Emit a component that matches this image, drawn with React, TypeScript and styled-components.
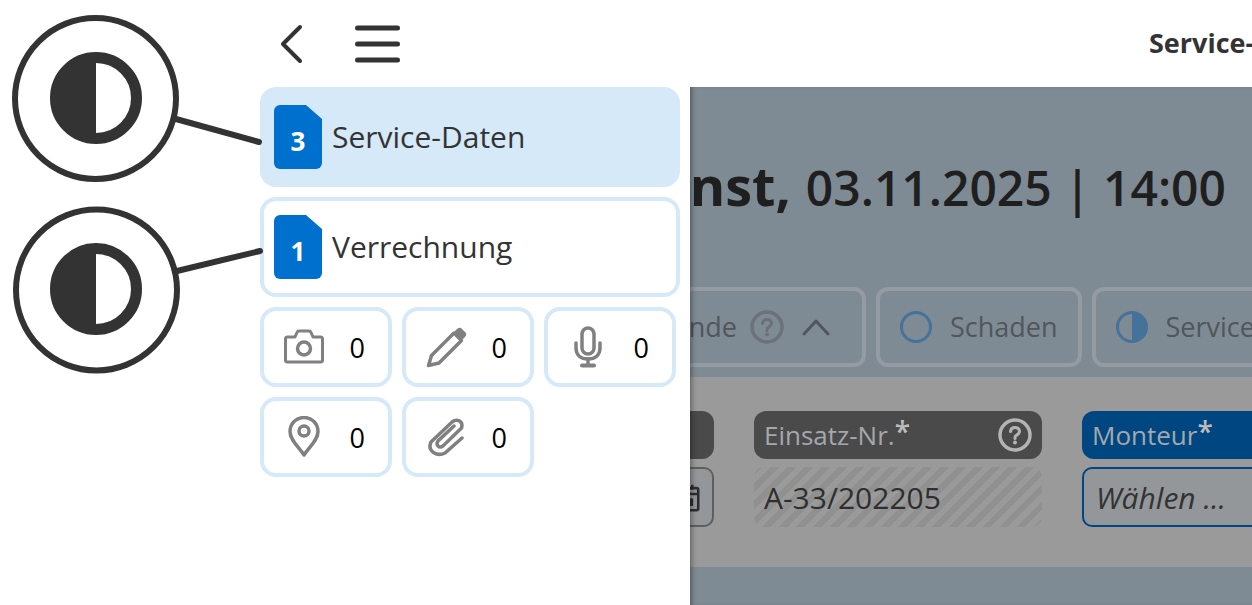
import styled, { createGlobalStyle } from "styled-components";

const GlobalStyle = createGlobalStyle`
  html, body {
    margin: 0;
    padding: 0;
    background: #fff;
  }
  * {
    box-sizing: border-box;
  }
`;

const Page = styled.div`
  display: flex;
  width: 1252px;
  height: 605px;
  overflow: hidden;
  font-family: "Open Sans", "Liberation Sans", sans-serif;
  color: #333;
`;

const Gutter = styled.div`
  position: relative;
  flex: 0 0 260px;
`;

const Callouts = styled.svg`
  position: absolute;
  top: 0;
  left: 0;
  overflow: visible;
`;

const Sidebar = styled.aside`
  flex: 0 0 420px;
  display: flex;
  flex-direction: column;
  gap: 10px;
`;

const Toolbar = styled.div`
  display: flex;
  align-items: center;
  gap: 49px;
  height: 77px;
  padding: 10px 0 0 20px;
`;

const NavItem = styled.div<{ $active?: boolean }>`
  display: flex;
  align-items: center;
  gap: 10px;
  height: 100px;
  padding: 0 10px 2px;
  border-radius: 16px;
  border: 4px solid #d5e9f9;
  background: ${(props) => (props.$active ? "#d5e9f9" : "#fff")};
  font-size: 30px;
`;

const DocBadge = styled.div`
  flex: 0 0 48px;
  height: 64px;
  margin-top: 2px;
  display: flex;
  align-items: flex-end;
  justify-content: center;
  padding-bottom: 11px;
  background: #0070cf;
  border-radius: 6px;
  clip-path: polygon(0 0, 32px 0, 48px 14px, 48px 64px, 0 64px);
  color: #fff;
  font-size: 26px;
  font-weight: 700;
  line-height: 34px;
`;

const Tiles = styled.div`
  display: grid;
  grid-template-columns: repeat(3, 132px);
  grid-auto-rows: 80px;
  gap: 10px;
`;

const Tile = styled.div`
  display: flex;
  align-items: center;
  justify-content: space-between;
  padding: 0 23px 0 20px;
  border: 4px solid #d5e9f9;
  border-radius: 16px;
  font-size: 27px;
  color: #000;
`;

const IconSlot = styled.span`
  flex: 0 0 40px;
  display: flex;
  justify-content: center;
`;

const Main = styled.main`
  flex: 0 0 562px;
  margin-left: 10px;
  display: flex;
  flex-direction: column;
  overflow: hidden;
`;

const TopBar = styled.header`
  flex: 0 0 87px;
  display: flex;
  align-items: center;
  padding: 0 0 2px 459px;
  font-size: 27px;
  font-weight: 700;
  white-space: nowrap;
`;

const Stage = styled.section`
  position: relative;
  flex: 1;
  background: #7f8b94;
  overflow: hidden;
  &::after {
    content: "";
    position: absolute;
    inset: 0;
    box-shadow: inset 5px 0 5px -3px rgba(0, 0, 0, 0.35);
    pointer-events: none;
  }
`;

const Heading = styled.h1`
  display: flex;
  align-items: baseline;
  justify-content: flex-end;
  height: 200px;
  margin: 0;
  padding: 61px 26px 0 0;
  font-size: 48px;
  font-weight: 600;
  color: #1f1f1f;
  white-space: nowrap;
  b {
    font-size: 54px;
    font-weight: 700;
    margin-right: 15px;
  }
`;

const Tabs = styled.div`
  display: flex;
  gap: 10px;
  height: 80px;
  margin-left: -200px;
`;

const Tab = styled.div<{ $width: number }>`
  flex: 0 0 ${(props) => props.$width}px;
  display: flex;
  align-items: center;
  gap: 18px;
  padding: 0 20px;
  border: 4px solid #959ca1;
  border-radius: 12px;
  font-size: 27px;
  color: #50565b;
  white-space: nowrap;
`;

const OpenTab = styled(Tab)`
  justify-content: flex-end;
  gap: 13px;
  padding-right: 32px;
`;

const TabLabel = styled.span`
  margin-bottom: 2px;
`;

const Chevron = styled.svg`
  margin-left: 5px;
`;

const Band = styled.div`
  display: grid;
  grid-template-columns: repeat(3, 288px);
  column-gap: 40px;
  height: 190px;
  margin: 10px 0 0 -264px;
  padding-top: 34px;
  background: #9a9a9a;
`;

const Field = styled.div`
  display: flex;
  flex-direction: column;
  gap: 8px;
`;

const FieldLabel = styled.div<{ $blue?: boolean }>`
  display: flex;
  align-items: center;
  justify-content: space-between;
  height: 48px;
  padding: 0 10px;
  border-radius: 12px;
  background: ${(props) => (props.$blue ? "#004680" : "#4a4a4a")};
  color: #a4a8ac;
  font-size: 26px;
  sup {
    font-size: 28px;
    font-weight: 600;
    line-height: 0;
    vertical-align: 3px;
    color: #bdbdbd;
  }
`;

const Input = styled.div`
  display: flex;
  align-items: center;
  justify-content: flex-end;
  height: 60px;
  padding: 0 12px;
  border: 2px solid #5f5f5f;
  border-radius: 10px;
  background: #94979a;
`;

const ReadOnly = styled.div`
  display: flex;
  align-items: center;
  height: 60px;
  padding: 0 10px;
  border-radius: 10px;
  font-size: 30px;
  color: #2e2e2e;
  background: repeating-linear-gradient(
    135deg,
    #909090 0 6px,
    #9a9a9a 6px 12px
  );
`;

const Select = styled.div`
  display: flex;
  align-items: center;
  height: 60px;
  padding: 0 12px;
  border: 2px solid #004680;
  border-radius: 10px;
  background: #94979a;
  font-size: 30px;
  font-style: italic;
  color: #333;
`;

function HalfDisc({ cx, cy }: { cx: number; cy: number }) {
  return (
    <>
      <circle cx={cx} cy={cy} r={40.5} fill="#fff" stroke="#333" strokeWidth={11} />
      <path d={`M${cx} ${cy - 40}a40 40 0 0 0 0 80z`} fill="#333" />
    </>
  );
}

function CameraIcon() {
  return (
    <svg width="40" height="36" viewBox="0 0 40 36" fill="none" stroke="#808080" strokeWidth="3" strokeLinejoin="round">
      <path d="M3.500 8h7.500l2-4.500q.6-1.500 2-1.500h10q1.400 0 2 1.500l2 4.500h7.500q2 0 2 2v21q0 2-2 2h-33q-2 0-2-2v-21q0-2 2-2z" />
      <circle cx="20" cy="19.500" r="6.500" strokeWidth="3.500" />
    </svg>
  );
}

function PencilIcon() {
  return (
    <svg width="44" height="42" viewBox="0 0 44 42" fill="none">
      <path d="M2.500 39.500l3-10L28 7l7.500 7.500L13 37z" stroke="#808080" strokeWidth="3.500" strokeLinejoin="round" />
      <path d="M31 3q2-2 4-1l5 5q1 2-1 4l-3 3-8-8z" fill="#808080" />
      <path d="M1 41l1.500-7 5.500 5.500z" fill="#808080" />
    </svg>
  );
}

function MicIcon() {
  return (
    <svg width="30" height="42" viewBox="0 0 30 42" fill="none" stroke="#808080" strokeWidth="3.500" strokeLinecap="round">
      <rect x="9" y="2" width="12" height="26" rx="6" />
      <path d="M3 17v5c0 7 5 11 12 11s12-4 12-11v-5" />
      <path d="M15 33v6" />
      <path d="M9 39.500h12" strokeWidth="4" />
    </svg>
  );
}

function PinIcon() {
  return (
    <svg width="32" height="42" viewBox="0 0 32 42" fill="none" stroke="#808080" strokeWidth="3.500" strokeLinejoin="round">
      <path d="M16 39C10 30 2 24 2 15.500A14 14 0 0 1 30 15.500C30 24 22 30 16 39z" />
      <circle cx="16" cy="15" r="5" />
    </svg>
  );
}

function ClipIcon() {
  return (
    <svg width="36" height="40" viewBox="0 0 36 40" fill="none" stroke="#808080" strokeWidth="3.500" strokeLinecap="round">
      <path d="M34 21L17 36q-6 3-11.500-.5T3 25L24 5q4-3 7.500-1t2 7L15 29q-3 2-5 0t0-5L26 9" />
    </svg>
  );
}

function HelpIcon({ size, color }: { size: number; color: string }) {
  return (
    <svg width={size} height={size} viewBox="0 0 34 34" fill="none">
      <circle cx="17" cy="17" r="15" stroke={color} strokeWidth="3.500" />
      <path d="M12.500 13.500q.5-4 4.500-4t4.500 3.500q0 2.500-2.500 3.800t-2 3.700" stroke={color} strokeWidth="3" strokeLinecap="round" />
      <circle cx="17" cy="24.500" r="2" fill={color} />
    </svg>
  );
}

function App() {
  return (
    <Page>
      <GlobalStyle />
      <Gutter>
        <Callouts width="262" height="380" viewBox="0 0 262 380" fill="none">
          <circle cx="95.500" cy="98.500" r="80.500" stroke="#333" strokeWidth="6" />
          <HalfDisc cx={96} cy={98} />
          <path d="M176 119L259 142" stroke="#333" strokeWidth="6" strokeLinecap="round" />
          <circle cx="96.500" cy="290" r="80.500" stroke="#333" strokeWidth="6" />
          <HalfDisc cx={96} cy={289} />
          <path d="M177 271L260 251" stroke="#333" strokeWidth="6" strokeLinecap="round" />
        </Callouts>
      </Gutter>

      <Sidebar>
        <Toolbar>
          <svg width="26" height="40" viewBox="0 0 26 40" fill="none" stroke="#333" strokeWidth="4" strokeLinecap="round" strokeLinejoin="round">
            <path d="M20 3L3 20l17 17" />
          </svg>
          <svg width="46" height="38" viewBox="0 0 46 38" fill="none" stroke="#333" strokeWidth="5" strokeLinecap="round">
            <path d="M2.500 3h40M2.500 19h40M2.500 35h40" />
          </svg>
        </Toolbar>
        <NavItem $active>
          <DocBadge>3</DocBadge>
          Service-Daten
        </NavItem>
        <NavItem>
          <DocBadge>1</DocBadge>
          Verrechnung
        </NavItem>
        <Tiles>
          <Tile><IconSlot><CameraIcon /></IconSlot>0</Tile>
          <Tile><IconSlot><PencilIcon /></IconSlot>0</Tile>
          <Tile><IconSlot><MicIcon /></IconSlot>0</Tile>
          <Tile><IconSlot><PinIcon /></IconSlot>0</Tile>
          <Tile><IconSlot><ClipIcon /></IconSlot>0</Tile>
        </Tiles>
      </Sidebar>

      <Main>
        <TopBar>Service-Daten</TopBar>
        <Stage>
          <Heading>
            <b>Dienst,</b>03.11.2025 | 14:00
          </Heading>
          <Tabs>
            <OpenTab $width={376}>
              <TabLabel>Kunde</TabLabel>
              <HelpIcon size={34} color="#6b7278" />
              <Chevron width="28" height="18" viewBox="0 0 28 18" fill="none" stroke="#50565b" strokeWidth="3" strokeLinecap="round" strokeLinejoin="round">
                <path d="M2 16L14 3l12 13" />
              </Chevron>
            </OpenTab>
            <Tab $width={205}>
              <svg width="32" height="32" viewBox="0 0 32 32" fill="none">
                <circle cx="16" cy="16" r="14.500" stroke="#44729a" strokeWidth="3" />
              </svg>
              <TabLabel>Schaden</TabLabel>
            </Tab>
            <Tab $width={300}>
              <svg width="32" height="32" viewBox="0 0 32 32" fill="none">
                <circle cx="16" cy="16" r="14.500" stroke="#44729a" strokeWidth="3" />
                <path d="M16 1a15 15 0 0 1 0 30z" fill="#44729a" />
              </svg>
              <TabLabel>Service-Daten</TabLabel>
            </Tab>
          </Tabs>
          <Band>
            <Field>
              <FieldLabel />
              <Input>
                <svg width="24" height="29" viewBox="0 0 28 34" fill="none" stroke="#2e2e2e" strokeWidth="3">
                  <rect x="2" y="6" width="24" height="26" rx="2" />
                  <path d="M2 13h24M9 2v6M19 2v6" />
                  <rect x="8" y="18" width="12" height="9" fill="#2e2e2e" stroke="none" />
                </svg>
              </Input>
            </Field>
            <Field>
              <FieldLabel>
                <span>Einsatz-Nr.<sup>*</sup></span>
                <HelpIcon size={34} color="#b4b4b4" />
              </FieldLabel>
              <ReadOnly>A-33/202205</ReadOnly>
            </Field>
            <Field>
              <FieldLabel $blue>
                <span>Monteur<sup>*</sup></span>
              </FieldLabel>
              <Select>Wählen ...</Select>
            </Field>
          </Band>
        </Stage>
      </Main>
    </Page>
  );
}

export default App;
